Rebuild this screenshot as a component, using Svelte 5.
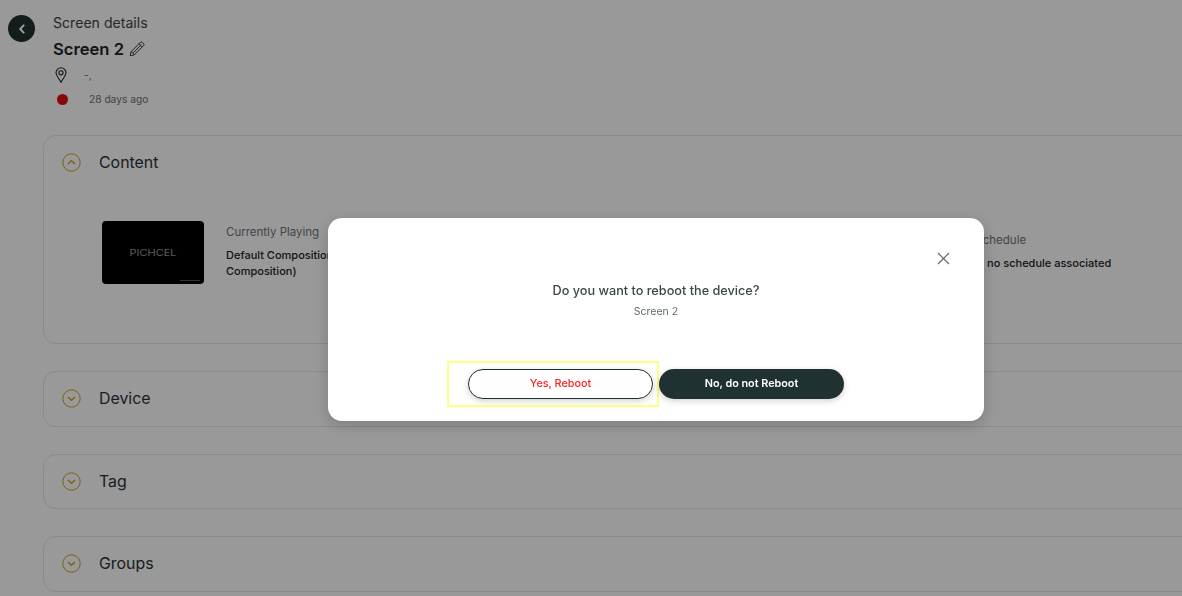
<script>
    let sections = [
        { name: "Device" },
        { name: "Tag" },
        { name: "Groups" }
    ]
</script>

<div class="page">
    <header class="head">
        <button class="back" aria-label="Back">
            <svg width="10" height="10" viewBox="0 0 10 10"><path d="M6.6 1.4 3.2 5l3.4 3.6" fill="none" stroke="#fff" stroke-width="2" stroke-linecap="round" stroke-linejoin="round"/></svg>
        </button>
        <div class="headText">
            <div class="crumb">Screen details</div>
            <div class="title">
                <span>Screen 2</span>
                <svg width="16" height="16" viewBox="0 0 16 16" fill="none" stroke="#212529" stroke-width=".9" stroke-linejoin="round"><path d="M1.2 14.8l1-4.2L11.6 1.2a1 1 0 0 1 1.4 0l1.8 1.8a1 1 0 0 1 0 1.4L5.4 13.8z"/><path d="M2.2 10.6l3.2 3.2M10 2.8l3.2 3.2M4 12l8.4-8.4"/></svg>
            </div>
            <div class="meta loc">
                <svg width="12" height="16" viewBox="0 0 12 16" fill="none" stroke="#212529" stroke-width="1.1"><path d="M6 15.4C4.6 12 1 9 1 5.8a5 5 0 0 1 10 0C11 9 7.4 12 6 15.4z"/><circle cx="6" cy="5.8" r="2.1"/></svg>
                <span>-,</span>
            </div>
            <div class="meta status">
                <i class="dot"></i>
                <span>28 days ago</span>
            </div>
        </div>
    </header>

    <section class="card open">
        <div class="cardHead">
            <svg class="chev" width="19" height="19" viewBox="0 0 19 19" fill="none" stroke="#c9a227"><circle cx="9.5" cy="9.5" r="8.7"/><path d="M6 11l3.5-3.2L13 11" stroke-width="1.4"/></svg>
            <span>Content</span>
        </div>
        <div class="content">
            <div class="thumb"><span class="logo">PICHCEL</span><i class="mini"></i></div>
            <div class="playing">
                <div class="label">Currently Playing</div>
                <div class="value">Default Composition (Default<br />Composition)</div>
            </div>
            <div class="schedule">
                <div class="label">Current Schedule</div>
                <div class="value">Currently no schedule associated</div>
            </div>
        </div>
    </section>

    {#each sections as s}
        <section class="card">
            <div class="cardHead">
                <svg class="chev" width="19" height="19" viewBox="0 0 19 19" fill="none" stroke="#c9a227"><circle cx="9.5" cy="9.5" r="8.7"/><path d="M6 8l3.5 3.2L13 8" stroke-width="1.4"/></svg>
                <span>{s.name}</span>
            </div>
        </section>
    {/each}
</div>

<div class="overlay">
    <div class="modal">
        <button class="close" aria-label="Close">
            <svg width="13" height="13" viewBox="0 0 13 13"><path d="M1 1l11 11M12 1 1 12" stroke="#5f6c6c" stroke-width="1.2" fill="none"/></svg>
        </button>
        <h2>Do you want to reboot the device?</h2>
        <p>Screen 2</p>
        <div class="actions">
            <div class="focusBox"><button class="btn yes">Yes, Reboot</button></div>
            <button class="btn no">No, do not Reboot</button>
        </div>
    </div>
</div>

<style>
    :global(body) {
        margin: 0;
        background: #fff;
        overflow: hidden;
        font-family: Inter, "Liberation Sans", sans-serif;
    }

    .page {
        height: 596px;
        overflow: hidden;
        box-sizing: border-box;
        padding: 14px 0 0 8px;
    }

    .head {
        display: flex;
        gap: 18px;
        height: 121px;
    }

    .back {
        width: 27px;
        height: 27px;
        margin: 1px 0 0;
        padding: 0;
        border: none;
        border-radius: 50%;
        background: #1f3130;
        display: flex;
        align-items: center;
        justify-content: center;
    }

    .crumb {
        font-size: 14.1px;
        line-height: 18px;
        color: #3b4545;
    }

    .title {
        display: flex;
        align-items: center;
        gap: 5px;
        margin-top: 7px;
        font-size: 16.6px;
        line-height: 20px;
        font-weight: 600;
        color: #212529;
    }

    .meta {
        display: flex;
        align-items: center;
        font-size: 10.2px;
        color: #6a6f73;
    }

    .loc {
        margin-top: 8px;
        height: 16px;
        margin-left: 2px;
        gap: 17px;
    }

    .status {
        margin-top: 8px;
        height: 16px;
        margin-left: 4px;
        gap: 21px;
    }

    .dot {
        width: 11px;
        height: 11px;
        border-radius: 50%;
        background: #e01010;
    }

    .card {
        margin: 0 -40px 27px 35px;
        height: 55.5px;
        box-sizing: border-box;
        border: 1px solid #e6e6e6;
        border-radius: 13px;
    }

    .card.open {
        height: 209px;
    }

    .cardHead {
        display: flex;
        align-items: center;
        gap: 18px;
        height: 53px;
        padding-left: 18px;
        font-size: 15.9px;
        color: #2b3238;
    }

    .content {
        position: relative;
        display: flex;
        padding: 32px 0 0 58px;
    }

    .thumb {
        position: relative;
        width: 102px;
        height: 63px;
        flex: none;
        border-radius: 4px;
        background: #000;
        display: flex;
        align-items: center;
        justify-content: center;
    }

    .logo {
        font-size: 8.5px;
        font-weight: 300;
        color: #c4c4c4;
        transform: scaleX(1.3);
    }

    .mini {
        position: absolute;
        right: 4px;
        bottom: 3px;
        width: 20px;
        height: 1px;
        background: #555;
    }

    .playing {
        width: 150px;
        margin-left: 22px;
        padding-top: 1px;
        flex: none;
        white-space: nowrap;
    }

    .schedule {
        margin-left: 555px;
        padding-top: 9px;
        white-space: nowrap;
    }

    .label {
        font-size: 11.5px;
        line-height: 20px;
        color: #6f7477;
    }

    .value {
        margin-top: 5px;
        font-size: 11px;
        line-height: 16px;
        font-weight: 500;
        color: #212529;
    }

    .schedule .value {
        margin-left: 4px;
    }

    .overlay {
        position: fixed;
        inset: 0;
        background: rgba(0, 0, 0, .4);
        padding: 218px 198px 0 328px;
    }

    .modal {
        position: relative;
        height: 203px;
        box-sizing: border-box;
        padding-top: 65px;
        border-radius: 14px;
        background: #fff;
        box-shadow: 0 4px 16px rgba(0, 0, 0, .2);
        text-align: center;
    }

    .close {
        position: absolute;
        top: 34px;
        right: 34px;
        padding: 0;
        border: none;
        background: none;
        line-height: 0;
    }

    h2 {
        margin: 0;
        font-size: 12.7px;
        line-height: 16px;
        font-weight: 500;
        color: #3b4848;
    }

    p {
        margin: 5px 0 0;
        font-size: 10.5px;
        line-height: 16px;
        color: #5f6c6c;
    }

    .actions {
        display: flex;
        justify-content: center;
        position: absolute;
        left: 119px;
        top: 143px;
    }

    .focusBox {
        box-sizing: border-box;
        width: 212px;
        height: 46px;
        padding: 6px 4px 0 19px;
        border: 2px solid #ffff80;
    }

    .btn {
        width: 185px;
        height: 30px;
        padding: 0 0 2px;
        border-radius: 15px;
        font-family: inherit;
        font-size: 10.8px;
        font-weight: 500;
        box-shadow: 0 2px 6px rgba(0, 0, 0, .18);
    }

    .yes {
        border: 1px solid #1f3130;
        background: #fff;
        color: #ff2020;
    }

    .no {
        margin-top: 8px;
        border: none;
        background: #1f3130;
        color: #fff;
        font-weight: 600;
    }
</style>
